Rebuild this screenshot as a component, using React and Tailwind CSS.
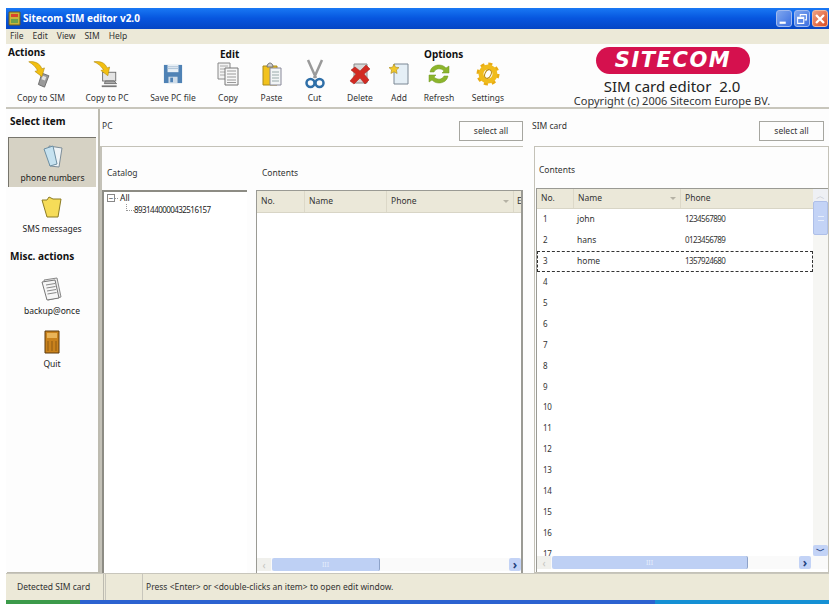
import React from 'react';

const ui = { fontFamily: '"Noto Sans", "Liberation Sans", sans-serif' };

const CopySimIcon = () => (
  <svg width="28" height="28" viewBox="0 0 32 32">
    <path d="M17 15l8 3-5 13-7-3z" fill="#9a9a9a" stroke="#666" strokeWidth="1" />
    <path d="M18 18l4 1.500-1.500 4-4-1.500z" fill="#e3e3e3" />
    <path d="M2 2c7-1 13 2 15 8l3-1-3 10-8-6 3-1C10 8 7 5 2 2z" fill="#f2bf12" stroke="#a98308" strokeWidth=".6" />
  </svg>
);

const CopyPcIcon = () => (
  <svg width="28" height="28" viewBox="0 0 32 32">
    <rect x="11" y="14" width="15" height="10" fill="#e4e4e4" stroke="#666" />
    <path d="M13 27l1-3h10l3 3z" fill="#aaa" stroke="#555" strokeWidth=".8" />
    <path d="M10 29h17v2H10z" fill="#777" />
    <path d="M1 2c7-1 13 1 15 7l3-1-2 10-8-6 3-1C9 7 6 4 1 2z" fill="#f2bf12" stroke="#a98308" strokeWidth=".6" />
  </svg>
);

const SaveIcon = () => (
  <svg width="20" height="20" viewBox="0 0 22 22">
    <path d="M1 1h20v20H1z" fill="#4f82b5" />
    <path d="M5 1h12v8H5z" fill="#e6eef5" />
    <path d="M5 3h12M5 5h12" stroke="#a9c0d4" />
    <path d="M6 14h10v7H6z" fill="#cfdce8" />
    <path d="M8 15h3v5H8z" fill="#4f82b5" />
  </svg>
);

const CopyIcon = () => (
  <svg width="22" height="24" viewBox="0 0 22 24">
    <path d="M1 1h12v16H1z" fill="#f3f3f3" stroke="#888" />
    <path d="M3 4h8M3 7h8M3 10h8M3 13h8" stroke="#aaa" />
    <path d="M8 6h13v17H8z" fill="#f7f7f7" stroke="#777" />
    <path d="M10 9h9M10 12h9M10 15h9M10 18h9M10 20.500h9" stroke="#999" />
  </svg>
);

const PasteIcon = () => (
  <svg width="20" height="24" viewBox="0 0 20 24">
    <path d="M1 4h14v19H1z" fill="#f2c21c" stroke="#a98a1a" />
    <path d="M8 6h11v17H8z" fill="#f2f5f6" stroke="#889" />
    <path d="M10 10h7M10 13h7M10 16h7M10 19h7" stroke="#9aa" />
    <path d="M5 5c0-3 2-4 3-4s3 1 3 4z" fill="#ccc" stroke="#777" />
  </svg>
);

const CutIcon = () => (
  <svg width="20" height="30" viewBox="0 0 20 30">
    <path d="M3 1l8 18M17 1l-8 18" stroke="#9a9a9a" strokeWidth="2.500" />
    <circle cx="5.500" cy="24" r="4" fill="none" stroke="#2f6fa8" strokeWidth="2.500" />
    <circle cx="14.500" cy="24" r="4" fill="none" stroke="#2f6fa8" strokeWidth="2.500" />
  </svg>
);

const DeleteIcon = () => (
  <svg width="22" height="22" viewBox="0 0 22 22">
    <path d="M5 1h13v19H5z" fill="#d8d8d8" stroke="#888" />
    <path d="M2 7l4-3 5 4 6-6 4 4-6 5 5 6-4 4-5-6-6 6-4-3 6-7z" fill="#d22a22" stroke="#a51a14" strokeWidth=".5" />
  </svg>
);

const AddIcon = () => (
  <svg width="20" height="22" viewBox="0 0 20 22">
    <path d="M5 1h14v20H5z" fill="#e5eff6" stroke="#7a8794" />
    <path d="M5 1l1.500 3.200 3.500.4-2.600 2.400.7 3.500L5 8.800 1.900 10.500l.7-3.500L0 4.600l3.500-.4z" fill="#f2c82a" stroke="#a98a1a" strokeWidth=".6" />
  </svg>
);

const RefreshIcon = () => (
  <svg width="22" height="22" viewBox="0 0 22 22" fill="#8cb52c" stroke="#6e9420" strokeWidth=".5">
    <path d="M2 9c1-5 5-7 9-7 3 0 5 1 7 3l3-2v7h-7l2-2c-3-3-8-3-10 1z" />
    <path d="M20 13c-1 5-5 7-9 7-3 0-5-1-7-3l-3 2v-7h7l-2 2c3 3 8 3 10-1z" />
  </svg>
);

const SettingsIcon = () => (
  <svg width="24" height="24" viewBox="0 0 24 24">
    <circle cx="12" cy="12" r="10" fill="none" stroke="#e8ac14" strokeWidth="3" strokeDasharray="4 3.850" />
    <circle cx="12" cy="12" r="7" fill="none" stroke="#f0bc1c" strokeWidth="5" />
    <ellipse cx="12" cy="12" rx="3" ry="4.500" transform="rotate(25 12 12)" fill="#fff" stroke="#b98a12" />
  </svg>
);

const PhoneCardIcon = () => (
  <svg width="22" height="24" viewBox="0 0 22 24">
    <path d="M7 2l13 2-3 19-9-1z" fill="#eef3f6" stroke="#7d8d98" />
    <path d="M2 5l9-3 4 18-7 2z" fill="#c6e2f0" stroke="#6d8fa3" />
  </svg>
);

const SmsCardIcon = () => (
  <svg width="22" height="24" viewBox="0 0 22 24">
    <path d="M1 5l5 0 2-3 4 2 8 0-3 18H6z" fill="#f6dc58" stroke="#8c7c24" />
  </svg>
);

const BackupIcon = () => (
  <svg width="22" height="24" viewBox="0 0 22 24">
    <path d="M3 3l13-2 4 19-13 3z" fill="#ececec" stroke="#888" />
    <path d="M1 5l13-2 4 18-12 2z" fill="#f6f6f6" stroke="#777" />
    <path d="M5 8l9-1.500M5.500 11l9-1.500M6 14l9-1.500M6.500 17l9-1.500" stroke="#888" />
  </svg>
);

const QuitIcon = () => (
  <svg width="16" height="24" viewBox="0 0 16 24">
    <path d="M1 1h14v22H1z" fill="#c9821c" stroke="#5c3a0e" />
    <path d="M3 3h10v5H3z" fill="#e9b458" />
    <path d="M4 11v10M8 11v10M12 11v10" stroke="#8f5a12" />
  </svg>
);

const MinimizeIcon = () => (
  <svg width="14" height="14" viewBox="0 0 16 16">
    <path d="M3 11h7v2.500H3z" fill="#fff" />
  </svg>
);

const RestoreIcon = () => (
  <svg width="14" height="14" viewBox="0 0 16 16" fill="none" stroke="#fff" strokeWidth="1.200">
    <path d="M6 5V3h7v6h-2" />
    <path d="M3 6h7v7H3z" />
    <path d="M3 7h7" strokeWidth="2" />
  </svg>
);

const CloseIcon = () => (
  <svg width="14" height="14" viewBox="0 0 16 16">
    <path d="M3.500 3.500l9 9M12.500 3.500l-9 9" stroke="#fff" strokeWidth="2.600" />
  </svg>
);

const SimAppIcon = () => (
  <svg width="13" height="15" viewBox="0 0 13 15">
    <path d="M1 1h11v13H1z" fill="#c9b53a" stroke="#6d5a1a" />
    <path d="M3 3h7v3H3z" fill="#d9442b" />
    <path d="M3 8h7v4H3z" fill="#6ea04a" />
  </svg>
);

const ToolButton = ({ label, width, children }) => (
  <div className="flex flex-col items-center shrink-0" style={{ width }}>
    <div className="h-[36px] flex items-center justify-center">{children}</div>
    <span className="text-[8.500px] leading-[12px] text-[#333] whitespace-nowrap">{label}</span>
  </div>
);

const SideItem = ({ label, active, height, children }) => (
  <div className={`flex flex-col items-center justify-end pb-[3px] ${active ? 'bg-[#d6d2c4] border-t border-l border-[#77756c] mx-[1px]' : ''}`} style={{ height }}>
    {children}
    <span className="text-[8.500px] leading-[12px] mt-[4px] text-[#222] whitespace-nowrap">{label}</span>
  </div>
);

const ColHead = ({ width, arrow, children }) => (
  <div className="flex items-center justify-between h-full pl-[4px] pr-[4px] border-r border-[#dcd8c8] shrink-0" style={{ width }}>
    <span className="text-[8.500px] text-[#333]">{children}</span>
    {arrow && <span className="w-0 h-0 border-l-[3px] border-r-[3px] border-t-[3px] border-l-transparent border-r-transparent border-t-[#b5b2a5]" />}
  </div>
);

const simRows = [
  ['1', 'john', '1234567890'],
  ['2', 'hans', '0123456789'],
  ['3', 'home', '1357924680'],
  ['4'], ['5'], ['6'], ['7'], ['8'], ['9'], ['10'], ['11'], ['12'], ['13'], ['14'], ['15'], ['16'], ['17'],
];

const HScroll = ({ thumbWidth }) => (
  <div className="h-[13px] flex items-center bg-[#fafafa] shrink-0">
    <div className="w-[14px] h-[13px] flex items-center justify-center bg-[#f0f0ec] text-[#c4c4c0] text-[10px] leading-none">‹</div>
    <div className="h-[13px] ml-[1px] flex items-center justify-center rounded-[2px] bg-[#bed0f4] border-r border-[#8da2c8]" style={{ width: thumbWidth }}>
      <span className="text-[7px] leading-none text-[#e6eefc]">III</span>
    </div>
    <div className="flex-1" />
    <div className="w-[12px] h-[13px] flex items-center justify-center rounded-[2px] bg-[#c3d3f6] text-[#24427e] text-[12px] font-bold leading-none">›</div>
  </div>
);

export default function App() {
  return (
    <div className="w-[831px] h-[604px] bg-white overflow-hidden pt-[8px] pl-[6px] pr-[2px] flex flex-col" style={ui}>
      {/* Title bar */}
      <div className="h-[21px] shrink-0 flex items-center pl-[2px] pr-[1px] bg-gradient-to-b from-[#1a78f4] via-[#0755de] to-[#0546c4]">
        <SimAppIcon />
        <span className="ml-[2px] text-[10px] font-bold text-white">Sitecom SIM editor v2.0</span>
        <div className="ml-auto flex gap-[2px]">
          <div className="w-[16px] h-[17px] rounded-[3px] flex items-center justify-center bg-gradient-to-br from-[#7fa6ee] to-[#3d6fe0] border border-[#9fb9ee]"><MinimizeIcon /></div>
          <div className="w-[16px] h-[17px] rounded-[3px] flex items-center justify-center bg-gradient-to-br from-[#7fa6ee] to-[#3d6fe0] border border-[#9fb9ee]"><RestoreIcon /></div>
          <div className="w-[16px] h-[17px] rounded-[3px] flex items-center justify-center bg-gradient-to-br from-[#f0a080] to-[#d84a20] border border-[#eeb8a0]"><CloseIcon /></div>
        </div>
      </div>

      {/* Menu bar */}
      <div className="h-[15px] shrink-0 flex items-center gap-[9px] pl-[4px] bg-[#ece9d8] text-[8.500px] text-[#333]">
        <span>File</span><span>Edit</span><span>View</span><span>SIM</span><span>Help</span>
      </div>

      {/* Toolbar */}
      <div className="h-[65px] shrink-0 flex bg-[#fdfdfd] border-b-2 border-[#c8c6bc]">
        <div className="flex flex-col w-[200px] shrink-0">
          <h2 className="text-[10px] leading-[14px] mt-[1px] pl-[2px] font-bold text-[#111]">Actions</h2>
          <div className="flex pl-[2px] -mt-[3px]">
            <ToolButton label="Copy to SIM" width={66}><CopySimIcon /></ToolButton>
            <ToolButton label="Copy to PC" width={66}><CopyPcIcon /></ToolButton>
            <ToolButton label="Save PC file" width={66}><SaveIcon /></ToolButton>
          </div>
        </div>
        <div className="flex flex-col w-[208px] shrink-0">
          <h2 className="text-[10px] leading-[14px] mt-[3px] pl-[14px] font-bold text-[#111]">Edit</h2>
          <div className="flex -mt-[5px]">
            <ToolButton label="Copy" width={44}><CopyIcon /></ToolButton>
            <ToolButton label="Paste" width={43}><PasteIcon /></ToolButton>
            <ToolButton label="Cut" width={43}><CutIcon /></ToolButton>
            <ToolButton label="Delete" width={48}><DeleteIcon /></ToolButton>
            <ToolButton label="Add" width={30}><AddIcon /></ToolButton>
          </div>
        </div>
        <div className="flex flex-col w-[98px] shrink-0">
          <h2 className="text-[10px] leading-[14px] mt-[3px] pl-[10px] font-bold text-[#111]">Options</h2>
          <div className="flex -mt-[5px]">
            <ToolButton label="Refresh" width={50}><RefreshIcon /></ToolButton>
            <ToolButton label="Settings" width={48}><SettingsIcon /></ToolButton>
          </div>
        </div>
        <div className="flex-1 flex flex-col items-center pt-[3px] pl-[3px]">
          <div className="w-[154px] h-[28px] ml-[2px] rounded-full bg-[#d5114e] flex items-center justify-center">
            <span className="text-[21px] leading-none font-bold italic text-white tracking-[1.500px]" style={{ fontFamily: '"DejaVu Sans", sans-serif' }}>SITECOM</span>
          </div>
          <span className="text-[15px] leading-[17px] mt-[4px] text-[#222] whitespace-pre">SIM card editor  2.0</span>
          <span className="text-[11px] leading-[12px] text-[#333] whitespace-nowrap">Copyright (c) 2006 Sitecom Europe BV.</span>
        </div>
      </div>

      {/* Main area */}
      <div className="flex-1 min-h-0 flex bg-[#fdfdfd]">
        {/* Left nav */}
        <aside className="w-[93px] shrink-0 ml-[1px] border-r-2 border-b border-[#bdbbb0] flex flex-col pr-[1px]">
          <h3 className="text-[10px] leading-[14px] mt-[5px] pl-[3px] font-bold text-[#111]">Select item</h3>
          <div className="mt-[9px]">
            <SideItem label="phone numbers" active height={50}><PhoneCardIcon /></SideItem>
            <SideItem label="SMS messages" height={51}><SmsCardIcon /></SideItem>
          </div>
          <h3 className="text-[10px] leading-[14px] mt-[11px] pl-[3px] font-bold text-[#111]">Misc. actions</h3>
          <SideItem label="backup@once" height={57}><BackupIcon /></SideItem>
          <SideItem label="Quit" height={53}><QuitIcon /></SideItem>
        </aside>

        {/* PC panel */}
        <section className="w-[430px] shrink-0 flex flex-col">
          <div className="h-[37px] shrink-0 flex items-start pl-[2px] pr-[7px] pt-[12px]">
            <span className="text-[8.500px] text-[#333] -mt-[1px]">PC</span>
            <button className="ml-auto w-[64px] h-[20px] border border-[#a6a6a0] bg-[#fdfdfd] text-[8.500px] text-[#333]">select all</button>
          </div>
          <div className="flex-1 min-h-0 border-t border-l-2 border-[#c4c2b8] mr-[7px] flex flex-col">
            <div className="flex h-[43px] shrink-0 items-end pb-[10px] text-[8.500px] text-[#333]">
              <span className="ml-[5px] w-[155px]">Catalog</span>
              <span>Contents</span>
            </div>
            <div className="flex-1 min-h-0 flex">
              <div className="w-[145px] shrink-0 border-t-2 border-l-2 border-[#8d8c84] bg-white pl-[3px]">
                <div className="flex items-center h-[12px]">
                  <span className="w-[8px] h-[8px] border border-[#888] flex items-center justify-center text-[8px] leading-none text-[#333]">−</span>
                  <span className="w-[3px] border-t border-dotted border-[#999]" />
                  <span className="ml-[2px] text-[8.500px] text-[#222]">All</span>
                </div>
                <div className="flex items-center h-[12px]">
                  <span className="ml-[19px] w-[8px] h-[7px] mb-[6px] border-l border-b border-dotted border-[#999]" />
                  <span className="text-[8px] tracking-[-0.550px] text-[#222]">8931440000432516157</span>
                </div>
              </div>
              <div className="ml-[9px] flex-1 min-w-0 flex flex-col border-l border-t border-[#9a9a94] bg-white border-r-2 overflow-hidden pb-[2px]">
                <div className="h-[22px] shrink-0 flex bg-[#ebe8d9] border-b border-[#d8d5c6] overflow-hidden">
                  <ColHead width={48}>No.</ColHead>
                  <ColHead width={82}>Name</ColHead>
                  <ColHead width={127} arrow>Phone</ColHead>
                  <span className="pl-[3px] text-[8.500px] text-[#333] self-center">E</span>
                </div>
                <div className="flex-1" />
                <HScroll thumbWidth={108} />
              </div>
            </div>
          </div>
        </section>

        {/* SIM card panel */}
        <section className="flex-1 min-w-0 flex flex-col pl-[1px]">
          <div className="h-[37px] shrink-0 flex items-start pl-[1px] pr-[5px] pt-[12px]">
            <span className="text-[8.500px] text-[#333] -mt-[1px]">SIM card</span>
            <button className="ml-auto w-[65px] h-[20px] border border-[#a6a6a0] bg-[#fdfdfd] text-[8.500px] text-[#333]">select all</button>
          </div>
          <div className="flex-1 min-h-0 ml-[3px] border border-[#c4c2b8] flex flex-col pl-[1px]">
            <div className="h-[41px] shrink-0 flex items-end pb-[11px] pl-[3px] text-[8.500px] text-[#333]">Contents</div>
            <div className="flex-1 min-h-0 flex flex-col border-t border-l border-[#9a9a94] bg-white pb-[3px]">
              <div className="flex-1 min-h-0 flex">
                <div className="flex-1 min-w-0 flex flex-col overflow-hidden">
                  <div className="h-[20px] shrink-0 flex bg-[#ebe8d9] border-b border-[#d8d5c6]">
                    <ColHead width={37}>No.</ColHead>
                    <ColHead width={107} arrow>Name</ColHead>
                    <ColHead width={133}>Phone</ColHead>
                  </div>
                  <div className="flex-1 min-h-0 overflow-hidden">
                    {simRows.map(([no, name, phone]) => (
                      <div key={no} className={`h-[20.900px] flex items-center text-[8.500px] text-[#333] border border-dashed ${no === '3' ? 'border-[#333]' : 'border-transparent'}`}>
                        <span className="w-[36px] pl-[5px] shrink-0 text-[8px] tracking-[-0.300px]">{no}</span>
                        <span className="w-[111px] pl-[3px] shrink-0">{name}</span>
                        <span className="text-[8px] tracking-[-0.550px]">{phone}</span>
                      </div>
                    ))}
                  </div>
                </div>
                <div className="w-[15px] shrink-0 flex flex-col bg-[#f6f6f3]">
                  <div className="h-[12px] flex items-center justify-center bg-[#eef0f4] text-[#c0c4cc] text-[9px] leading-none">︿</div>
                  <div className="h-[34px] rounded-[2px] bg-[#c3d3f6] border border-[#aebfe8] flex items-center justify-center">
                    <span className="w-[6px] h-[5px] border-y border-[#e6eefc]" />
                  </div>
                  <div className="flex-1" />
                  <div className="h-[11px] flex items-center justify-center rounded-[2px] bg-[#c3d3f6] text-[#24427e] text-[9px] font-bold leading-none">﹀</div>
                </div>
              </div>
              <div className="pr-[17px] bg-[#fafafa]">
                <HScroll thumbWidth={196} />
              </div>
            </div>
          </div>
        </section>
      </div>

      {/* Status bar */}
      <div className="h-[27px] shrink-0 flex bg-[#ece9d8] border-t border-[#c8c6bc] text-[8.500px] text-[#333]">
        <div className="w-[98px] shrink-0 flex items-center pl-[11px] border-r border-[#bdbbb0]">Detected SIM card</div>
        <div className="w-[38px] shrink-0 ml-[1px] border-l border-r border-[#c8c6bc]" />
        <div className="flex-1 flex items-center pl-[3px]">{'Press <Enter> or <double-clicks an item> to open edit window.'}</div>
      </div>

      {/* Taskbar sliver */}
      <div className="h-[4px] shrink-0 flex">
        <div className="w-[74px] bg-[#3c9a4a]" />
        <div className="w-[575px] bg-[#2c62d0]" />
        <div className="flex-1 bg-[#1590d4]" />
      </div>
    </div>
  );
}
